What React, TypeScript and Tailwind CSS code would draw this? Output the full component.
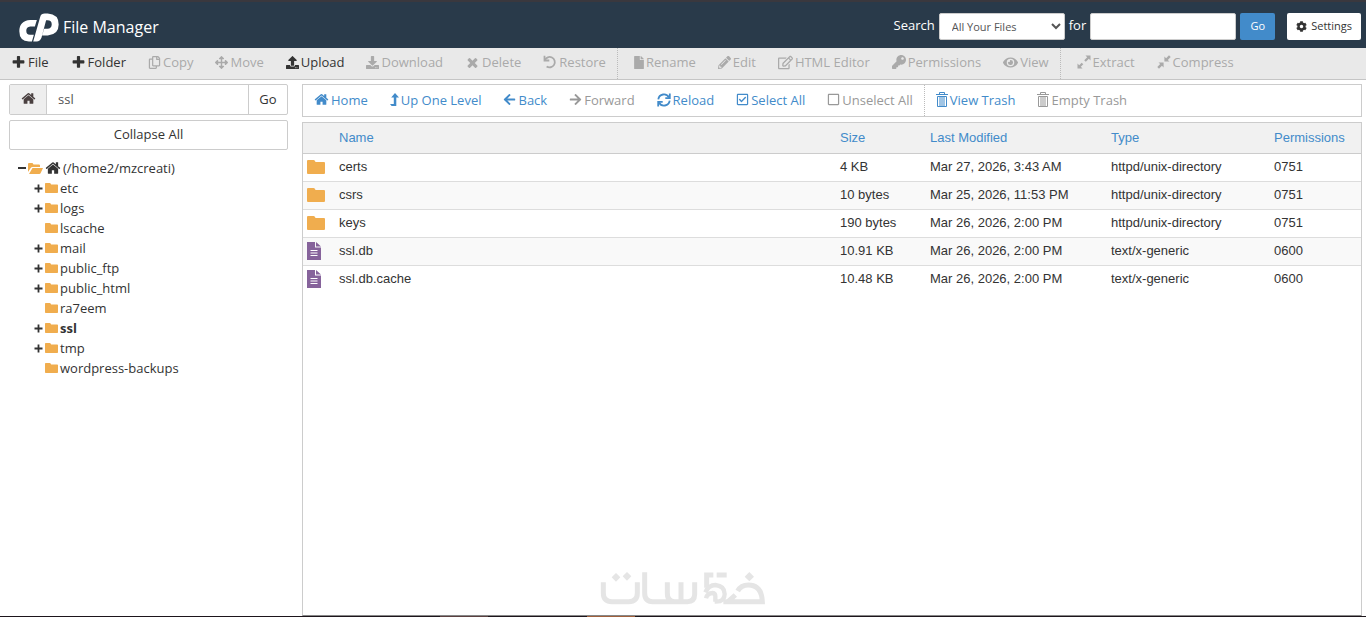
import type { ReactNode } from 'react';
import {
  FaArrowLeft,
  FaArrowRight,
  FaArrowsAlt,
  FaCog,
  FaDownload,
  FaEye,
  FaFile,
  FaKey,
  FaPencilAlt,
  FaRegCheckSquare,
  FaRegCopy,
  FaRegEdit,
  FaRegSquare,
  FaUpload,
} from 'react-icons/fa';

const paths = {
  plus: 'M1600 736v192q0 40-28 68t-68 28h-416v416q0 40-28 68t-68 28h-192q-40 0-68-28t-28-68v-416h-416q-40 0-68-28t-28-68v-192q0-40 28-68t68-28h416v-416q0-40 28-68t68-28h192q40 0 68 28t28 68v416h416q40 0 68 28t28 68z',
  times: 'M1490 1322q0 40-28 68l-136 136q-28 28-68 28t-68-28l-294-294-294 294q-28 28-68 28t-68-28l-136-136q-28-28-28-68t28-68l294-294-294-294q-28-28-28-68t28-68l136-136q28-28 68-28t68 28l294 294 294-294q28-28 68-28t68 28l136 136q28 28 28 68t-28 68l-294 294 294 294q28 28 28 68z',
  home: 'M1472 992v480q0 26-19 45t-45 19h-384v-384h-256v384h-384q-26 0-45-19t-19-45v-480q0-1 .5-3t.5-3l575-474 575 474q1 2 1 6zm223-69l-62 74q-8 9-21 11h-3q-13 0-21-7l-692-577-692 577q-12 8-24 7-13-2-21-11l-62-74q-8-10-7-23.5t11-21.5l719-599q32-26 76-26t76 26l244 204v-195q0-14 9-23t23-9h192q14 0 23 9t9 23v408l219 182q10 8 11 21.5t-7 23.5z',
};

function Fa({ d, className = 'size-[15px]' }: { d: string; className?: string }) {
  return (
    <svg viewBox="0 0 1792 1792" fill="currentColor" className={`shrink-0 ${className}`} aria-hidden="true">
      <path d={d} />
    </svg>
  );
}

function Logo() {
  return (
    <svg viewBox="14 13 121 86" className="h-[29px] w-10 shrink-0" fill="#fff" aria-hidden="true">
      <path d="M68 33H48Q15 35 15 67q0 30 29 31h9l6-20H47q-11 0-11-12 0-12 12-13h14z" />
      <path d="M57 98l21-74q3-10 14-10h9q33 2 33 33 0 31-33 33H84l6-20h10q13-1 13-14 0-12-13-12h-4L82 87q-4 11-15 11z" />
    </svg>
  );
}

function UndoIcon() {
  return (
    <svg viewBox="0 0 14 14" className="size-[14px] shrink-0" fill="none" stroke="currentColor" strokeWidth="1.8" aria-hidden="true">
      <path d="M1.500 .8v4.700h4.800" />
      <path d="M1.800 5.200A5.200 5.200 0 1 1 3.600 11.400" />
    </svg>
  );
}

function RefreshIcon() {
  return (
    <svg viewBox="0 0 14 14" className="size-[14px] shrink-0" fill="none" stroke="currentColor" strokeWidth="1.8" aria-hidden="true">
      <path d="M1.300 6.300A5.700 5.700 0 0 1 12 4.500M12.700 7.700A5.700 5.700 0 0 1 2 9.500" />
      <path d="M12.800 .5v4.600H8.300M1.200 13.500V8.900h4.500" />
    </svg>
  );
}

function TrashIcon() {
  return (
    <svg viewBox="0 0 12 15" className="h-[15px] w-3 shrink-0" fill="none" stroke="currentColor" aria-hidden="true">
      <path d="M0 2.500h12M3.500 2.500v-2h5v2M1.500 4.500h9v10h-9zM4 5v9M6 5v9M8 5v9" />
    </svg>
  );
}

function LevelUpIcon() {
  return (
    <svg viewBox="0 0 9 14" className="h-[14px] w-[9px] shrink-0" fill="currentColor" aria-hidden="true">
      <path d="M5 0l4 4.600H6.300V13H1.600L0 11h3.800V4.600H1.200z" />
    </svg>
  );
}

function ExtractIcon() {
  return (
    <svg viewBox="0 0 14 14" className="size-[14px] shrink-0" fill="currentColor" aria-hidden="true">
      <path d="M8.500 .5h5v5l-1.700-1.700-3 3-1.600-1.600 3-3zM.5 8.500v5h5l-1.700-1.700 2.500-2.500-1.600-1.600-2.500 2.500z" />
    </svg>
  );
}

function CompressIcon() {
  return (
    <svg viewBox="0 0 14 14" className="size-[14px] shrink-0" fill="currentColor" aria-hidden="true">
      <path d="M7.400 1.500v5.100h5.100l-1.700-1.700L13.700 2 12 .3 9.100 3.200zM6.600 12.500V7.400H1.500l1.700 1.700L.3 12 2 13.700l2.900-2.900z" />
    </svg>
  );
}

function FolderIcon({ className }: { className: string }) {
  return (
    <svg viewBox="0 0 18 14" preserveAspectRatio="none" className={`shrink-0 text-[#f0ad4e] ${className}`} fill="currentColor" aria-hidden="true">
      <path d="M0 1q0-1 1-1h5.500q1 0 1.500 1l.5 1H17q1 0 1 1v10q0 1-1 1H1q-1 0-1-1z" />
    </svg>
  );
}

function OpenFolderIcon() {
  return (
    <svg viewBox="0 0 15 11" className="h-[11px] w-[15px] shrink-0 text-[#f0ad4e]" fill="currentColor" aria-hidden="true">
      <path d="M0 9V1q0-1 1-1h3.500l1 1.500H11q1 0 1 1V4H4.500Q3.300 4 2.700 5zM4.500 5H15l-2.300 5q-.4 1-1.500 1H1z" />
    </svg>
  );
}

function DocumentIcon() {
  return (
    <svg viewBox="0 0 14 18" className="h-[18px] w-[14px]" aria-hidden="true">
      <path d="M0 0h8v5.500h6V18H0zM9 0l5 4.500H9z" fill="#86639b" />
      <path d="M3.500 8.500h7M3.500 11h7M3.500 13.500h7" stroke="#fff" />
    </svg>
  );
}

type Item = { label: string; icon: ReactNode; on?: boolean; divide?: boolean };

const actions: Item[] = [
  { label: 'File', icon: <Fa d={paths.plus} />, on: true },
  { label: 'Folder', icon: <Fa d={paths.plus} />, on: true },
  { label: 'Copy', icon: <FaRegCopy className="size-[13px]" /> },
  { label: 'Move', icon: <FaArrowsAlt className="size-[13px]" /> },
  { label: 'Upload', icon: <FaUpload className="size-[13px]" />, on: true },
  { label: 'Download', icon: <FaDownload className="size-[13px]" /> },
  { label: 'Delete', icon: <Fa d={paths.times} /> },
  { label: 'Restore', icon: <UndoIcon /> },
  { label: 'Rename', icon: <FaFile className="h-[13px] w-[10px]" />, divide: true },
  { label: 'Edit', icon: <FaPencilAlt className="size-[13px]" /> },
  { label: 'HTML Editor', icon: <FaRegEdit className="size-[15px]" /> },
  { label: 'Permissions', icon: <FaKey className="size-[14px]" /> },
  { label: 'View', icon: <FaEye className="size-[15px]" /> },
  { label: 'Extract', icon: <ExtractIcon />, divide: true },
  { label: 'Compress', icon: <CompressIcon /> },
];

const navigation: Item[] = [
  { label: 'Home', icon: <Fa d={paths.home} />, on: true },
  { label: 'Up One Level', icon: <LevelUpIcon />, on: true },
  { label: 'Back', icon: <FaArrowLeft className="size-[13px]" />, on: true },
  { label: 'Forward', icon: <FaArrowRight className="size-[13px]" /> },
  { label: 'Reload', icon: <RefreshIcon />, on: true },
  { label: 'Select All', icon: <FaRegCheckSquare className="size-[13px]" />, on: true },
  { label: 'Unselect All', icon: <FaRegSquare className="size-[13px]" /> },
  { label: 'View Trash', icon: <TrashIcon />, on: true, divide: true },
  { label: 'Empty Trash', icon: <TrashIcon /> },
];

const tree = [
  { name: 'etc', open: true },
  { name: 'logs', open: true },
  { name: 'lscache' },
  { name: 'mail', open: true },
  { name: 'public_ftp', open: true },
  { name: 'public_html', open: true },
  { name: 'ra7eem' },
  { name: 'ssl', open: true, current: true },
  { name: 'tmp', open: true },
  { name: 'wordpress-backups' },
];

const files = [
  ['certs', '4 KB', 'Mar 27, 2026, 3:43 AM', 'httpd/unix-directory', '0751'],
  ['csrs', '10 bytes', 'Mar 25, 2026, 11:53 PM', 'httpd/unix-directory', '0751'],
  ['keys', '190 bytes', 'Mar 26, 2026, 2:00 PM', 'httpd/unix-directory', '0751'],
  ['ssl.db', '10.91 KB', 'Mar 26, 2026, 2:00 PM', 'text/x-generic', '0600'],
  ['ssl.db.cache', '10.48 KB', 'Mar 26, 2026, 2:00 PM', 'text/x-generic', '0600'],
];

function Header() {
  return (
    <header className="flex h-12 items-center justify-between border-t-2 border-[#3a383e] bg-[#293a4a] pr-[5px] pl-[19px] text-white">
      <div className="flex items-center gap-1 pt-1">
        <Logo />
        <h1 className="text-base leading-6">File Manager</h1>
      </div>
      <form className="flex items-center gap-1 pt-[2px]" onSubmit={(e) => e.preventDefault()}>
        <label htmlFor="scope" className="pb-[2px] text-[13px]">Search</label>
        <select id="scope" className="h-[27px] w-[126px] rounded-xs border border-[#ccc] bg-white px-2 text-[11px] text-[#555]">
          <option>All Your Files</option>
        </select>
        <label htmlFor="query" className="pb-[2px] text-[13px]">for</label>
        <input id="query" type="text" className="h-[27px] w-[146px] rounded-xs border border-[#ccc] bg-white px-2 text-[13px] text-[#555]" />
        <button type="submit" className="h-[27px] w-[35px] rounded-xs bg-[#428bca] text-[11px]">Go</button>
        <button type="button" className="ml-2 flex h-[27px] items-center gap-1 rounded-xs bg-white px-[9px] text-[11px] text-[#333]">
          <FaCog className="size-[11px]" />
          Settings
        </button>
      </form>
    </header>
  );
}

function Toolbar() {
  return (
    <div className="flex h-8 border-b border-[#c5c5c5] bg-[#e9e9e9]">
      {actions.map((item) => (
        <button
          key={item.label}
          disabled={!item.on}
          className={`flex items-center gap-[2px] px-[11px] pb-[3px] whitespace-nowrap ${item.on ? 'text-[#333]' : 'text-[#aaa]'} ${item.divide ? 'border-l border-dotted border-[#bbb] pl-4' : ''}`}
        >
          {item.icon}
          {item.label}
        </button>
      ))}
    </div>
  );
}

function Sidebar() {
  return (
    <aside className="w-[279px] shrink-0">
      <form className="flex h-[31px] rounded-xs border border-[#ccc]" onSubmit={(e) => e.preventDefault()}>
        <button type="button" aria-label="Home" className="flex w-9 items-center justify-center bg-[#eee] pb-[2px] text-[#4a4040]">
          <Fa d={paths.home} />
        </button>
        <input type="text" aria-label="Path" defaultValue="ssl" className="min-w-0 flex-1 border-x border-[#ccc] px-[11px] pb-[2px] text-[#555]" />
        <button type="submit" className="w-[38px] pb-[2px]">Go</button>
      </form>
      <button type="button" className="mt-[5px] h-[30px] w-full rounded-xs border border-[#ccc] pb-[2px]">Collapse All</button>
      <ul className="mt-2 pl-2">
        <li>
          <div className="flex h-5 items-center gap-[2px]">
            <span className="flex w-[9px] justify-center"><span className="h-[2px] w-2 bg-[#333]" /></span>
            <OpenFolderIcon />
            <Fa d={paths.home} className="size-4" />
            <span>(/home2/mzcreati)</span>
          </div>
          <ul className="pl-[17px]">
            {tree.map((node) => (
              <li key={node.name} className="flex h-5 items-center gap-[2px]">
                <span className="w-[9px] shrink-0">
                  {node.open && (
                    <svg viewBox="0 0 9 9" className="size-[9px]" stroke="#333" strokeWidth="1.8" aria-hidden="true">
                      <path d="M4.500 .5v8M.5 4.500h8" />
                    </svg>
                  )}
                </span>
                <FolderIcon className="h-[10px] w-[13px]" />
                <span className={node.current ? 'font-bold' : ''}>{node.name}</span>
              </li>
            ))}
          </ul>
        </li>
      </ul>
    </aside>
  );
}

function FileTable() {
  return (
    <div className="mt-[5px] flex-1 border border-[#ccc] border-b-[#888]">
      <table className="w-full table-fixed border-collapse text-left font-['Liberation_Sans',Arial,sans-serif] text-[#333]">
        <colgroup>
          <col className="w-9" />
          <col />
          <col className="w-[90px]" />
          <col className="w-[181px]" />
          <col className="w-[163px]" />
          <col className="w-[87px]" />
        </colgroup>
        <thead>
          <tr className="h-[30px] border-b border-[#ccc] bg-[#f1f1f1] text-[#428bca]">
            <th aria-label="Icon" />
            <th className="font-normal">Name</th>
            <th className="font-normal">Size</th>
            <th className="font-normal">Last Modified</th>
            <th className="font-normal">Type</th>
            <th className="font-normal">Permissions</th>
          </tr>
        </thead>
        <tbody>
          {files.map((row) => (
            <tr key={row[0]} className="h-7 border-b border-[#ddd] last:border-0 even:bg-[#f9f9f9]">
              <td className="pl-1">
                {row[3].startsWith('httpd') ? <FolderIcon className="h-[14px] w-[18px]" /> : <DocumentIcon />}
              </td>
              {row.map((cell, i) => (
                <td key={i}>{cell}</td>
              ))}
            </tr>
          ))}
        </tbody>
      </table>
    </div>
  );
}

function Watermark() {
  return (
    <svg viewBox="60 48 498 102" className="absolute bottom-[12px] left-[600px] h-[34px] w-[166px]" fill="none" stroke="#e5e5e5" strokeWidth="15" aria-hidden="true">
      <path d="M70 82v32q0 26 26 26h50q26 0 26-26v-32M194 52v62q0 26 24 26h104q22 0 22-22v-36M262 82v32q0 26 22 26M303 82v56" />
      <path d="M400 60h-20v38M410 60h30" />
      <path d="M376 112q10-22 30-22 28 3 28 27 0 23-26 23h-4M378 130q4-16 20-16 8 1 8 10v16" strokeWidth="13" />
      <path d="M430 140h117q-2-50-42-50-22 0-32 18M444 140l22-20" />
      <path d="M108 54l13 13-13 13-13-13zM141 51l13 13-13 13-13-13zM508 51l14 14-14 14-14-14z" fill="#e5e5e5" stroke="none" />
    </svg>
  );
}

export default function App() {
  return (
    <div className="relative flex min-h-screen flex-col bg-white font-['Open_Sans',sans-serif] text-[13px] leading-5 text-[#333]">
      <Header />
      <Toolbar />
      <div className="flex flex-1 gap-[14px] pt-1 pr-1 pl-[9px]">
        <Sidebar />
        <main className="flex min-w-0 flex-1 flex-col">
          <nav className="flex h-[33px] border border-[#ccc]">
            {navigation.map((item) => (
              <button
                key={item.label}
                disabled={!item.on}
                className={`flex items-center gap-[2px] px-[11px] pb-[2px] whitespace-nowrap ${item.on ? 'text-[#428bca]' : 'text-[#999]'} ${item.divide ? 'border-l border-dotted border-[#bbb]' : ''}`}
              >
                {item.icon}
                {item.label}
              </button>
            ))}
          </nav>
          <FileTable />
        </main>
      </div>
      <div className="flex h-px bg-[#1d151b]">
        <span className="ml-[440px] w-12 bg-[#5a4040]" />
        <span className="ml-[99px] w-12 bg-[#a0603c]" />
      </div>
      <Watermark />
    </div>
  );
}
